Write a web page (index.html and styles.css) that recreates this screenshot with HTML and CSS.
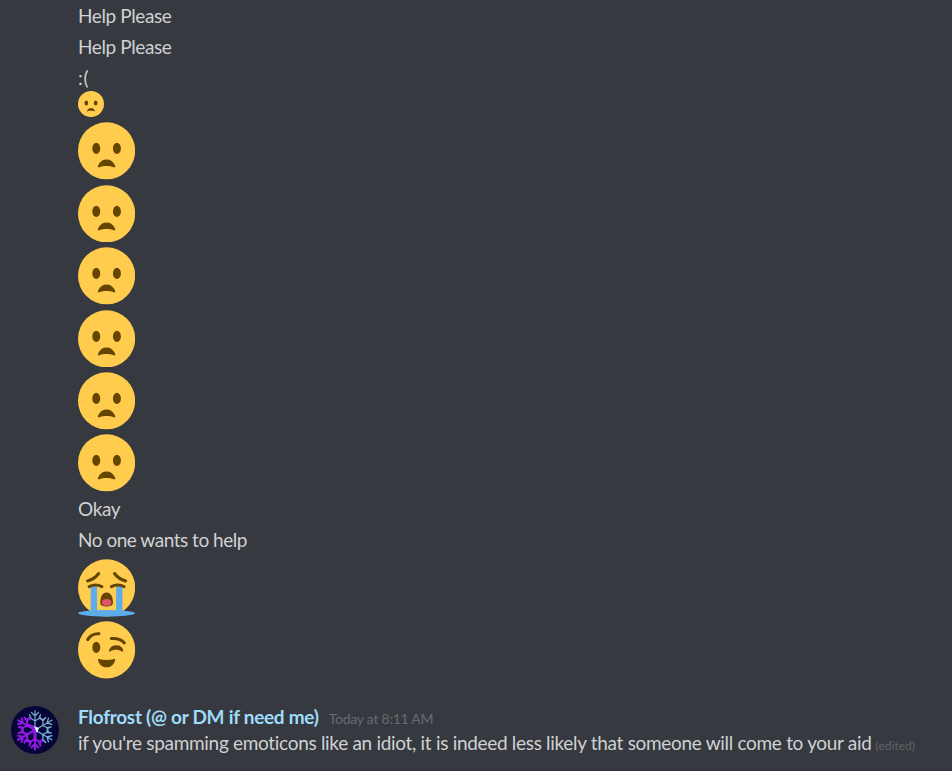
FILE: index.html
```html
<!DOCTYPE html>
<html lang="en">
<head>
<meta charset="utf-8">
<title>Chat</title>
<link rel="stylesheet" href="styles.css">
</head>
<body>
<svg class="defs" aria-hidden="true">
  <symbol id="frown" viewBox="0 0 36 36">
    <circle cx="18" cy="18" r="18" fill="#ffcc4d"/>
    <ellipse cx="11.5" cy="16.5" rx="2.5" ry="3.5" fill="#664500"/>
    <ellipse cx="24.5" cy="16.5" rx="2.5" ry="3.5" fill="#664500"/>
    <path fill="#664500" d="M23.485 27.879C23.474 27.835 22.34 23.5 18 23.5s-5.474 4.335-5.485 4.379c-.053.213.044.431.232.544.188.112.433.086.596-.06.01-.008 1.013-.863 4.657-.863 3.59 0 4.617.83 4.656.863.095.09.219.137.344.137.084 0 .169-.021.246-.064.196-.112.294-.339.239-.557z"/>
  </symbol>
</svg>
<main class="chat">
  <section class="messages">
    <p class="text">Help Please</p>
    <p class="text">Help Please</p>
    <p class="text sad">:(</p>
    <svg class="emoji small"><use href="#frown"/></svg>
    <svg class="emoji"><use href="#frown"/></svg>
    <svg class="emoji"><use href="#frown"/></svg>
    <svg class="emoji"><use href="#frown"/></svg>
    <svg class="emoji"><use href="#frown"/></svg>
    <svg class="emoji"><use href="#frown"/></svg>
    <svg class="emoji"><use href="#frown"/></svg>
    <p class="text okay">Okay</p>
    <p class="text nobody">No one wants to help</p>
    <svg class="emoji" viewBox="0 0 36 36">
      <circle cx="18" cy="18" r="18" fill="#ffcc4d"/>
      <ellipse cx="18" cy="34" rx="18" ry="2" fill="#5dadec"/>
      <path fill="#5dadec" d="M8 17h4v17H8zM24 17h4v17h-4z"/>
      <path fill="none" stroke="#664500" stroke-width="1.9" stroke-linecap="round" d="M6 13.7Q10.5 12.5 13 9M30 13.7Q25.5 12.5 23 9M7 17.3Q11 15.3 15 17.3M21 17.3Q25 15.3 29 17.3"/>
      <path fill="#664500" d="M14 27.5c0-3.8 1.3-6.5 4-6.5s4 2.7 4 6.5c0 3-8 3-8 0z"/>
      <ellipse cx="18" cy="27.2" rx="3" ry="2.1" fill="#dd5566"/>
    </svg>
    <svg class="emoji" viewBox="0 0 36 36">
      <circle cx="18" cy="18" r="18" fill="#ffcc4d"/>
      <ellipse cx="11.5" cy="16.5" rx="2.5" ry="3.5" fill="#664500"/>
      <path fill="none" stroke="#664500" stroke-width="1.9" stroke-linecap="round" d="M6.1 11.6Q8.5 7.6 13.2 7.9M21 10.9Q26.5 10.5 29.2 13.7"/>
      <path fill="#664500" d="M19.500 18.400c.7-2.200 2.500-3.400 5-3.300 2.500.2 3.700 1.800 4 3.300.1.600-.4.900-.9.600-2-1.400-5-1.400-7.200-.1-.5.300-1.100.1-.9-.5zM12.600 24.100c0-.4.300-.5.700-.3 2.800.9 6.600.9 9.400 0 .4-.2.700-.1.700.3-.3 2.700-2.300 4.900-5.400 4.900s-5.100-2.200-5.400-4.900z"/>
    </svg>
  </section>
  <article class="reply">
    <svg class="avatar" viewBox="0 0 48 48">
      <defs>
        <path id="arm" d="M0-1V-19.5M0-9L-5.5-12.5M0-9L5.5-12.5M0-14L-3.5-17.5M0-14L3.5-17.5M-4-11.5L-5.5-15.5M4-11.5L5.5-15.5M-4-11.5L-7.5-10.5M4-11.5L7.5-10.5"/>
      </defs>
      <circle cx="24" cy="24" r="24" fill="#050538"/>
      <g transform="translate(24 24)" fill="none" stroke-linecap="round">
        <use href="#arm" stroke="#76a9cb" stroke-width="1.2"/>
        <use href="#arm" transform="rotate(60)" stroke="#83aac5" stroke-width="1.3"/>
        <use href="#arm" transform="rotate(120)" stroke="#78b4e0" stroke-width="1.3"/>
        <use href="#arm" transform="rotate(180)" stroke="#9418e9" stroke-width="2"/>
        <use href="#arm" transform="rotate(240)" stroke="#9418e9" stroke-width="2.1"/>
        <use href="#arm" transform="rotate(300)" stroke="#9418e9" stroke-width="1.9"/>
        <path d="M-8-5L-2-3L0 3V10" stroke="#9418e9" stroke-width="3"/>
      </g>
      <path d="M23 20l5 2-2 5z" fill="#d7f4ff"/>
    </svg>
    <div class="body">
      <header class="heading"><strong class="author">Flofrost (@ or DM if need me)</strong><time class="time">Today at 8:11 AM</time></header>
      <p class="content"><span class="sentence">if you're spamming emoticons like an idiot, it is indeed less likely that someone will come to your aid</span><small class="edited">(edited)</small></p>
    </div>
  </article>
</main>
</body>
</html>
```
FILE: styles.css
```css
* { box-sizing: border-box; }
body {
  margin: 0;
  background: #36393f;
  color: #d0d1d2;
  font: 19px/24px Lato, "Open Sans", sans-serif;
  letter-spacing: -0.31px;
}
p { margin: 0; white-space: nowrap; }
.defs { position: absolute; width: 0; height: 0; }
.chat {
  height: 771px;
  display: flex;
  flex-direction: column;
  overflow: hidden;
  border-bottom: 1px solid #2f3136;
}
.messages {
  display: flex;
  flex-direction: column;
  align-items: flex-start;
  padding: 4px 0 0 78px;
}
.text { height: 31px; flex: none; letter-spacing: -0.4px; }
.sad { height: 25px; letter-spacing: 0.8px; }
.okay { height: 31.6px; line-height: 23px; }
.nobody { height: 30.6px; letter-spacing: -0.48px; }
.emoji { display: block; flex: none; width: 57.2px; height: 57.6px; margin-bottom: 4.8px; }
.emoji.small { width: 26px; height: 26px; margin-bottom: 5.4px; }
.reply { display: flex; gap: 19px; padding: 20.4px 0 0 11px; }
.avatar { flex: none; width: 48px; height: 48px; margin-top: 2px; }
.body { padding-top: 1px; }
.heading { display: flex; align-items: baseline; gap: 10px; height: 26px; }
.author { color: #9fdcfb; font-weight: 700; letter-spacing: -0.28px; }
.time { color: #686b70; font-size: 14px; letter-spacing: -0.25px; }
.content { display: flex; align-items: baseline; gap: 4px; }
.edited { color: #606368; font-size: 12px; letter-spacing: 0; }
```
